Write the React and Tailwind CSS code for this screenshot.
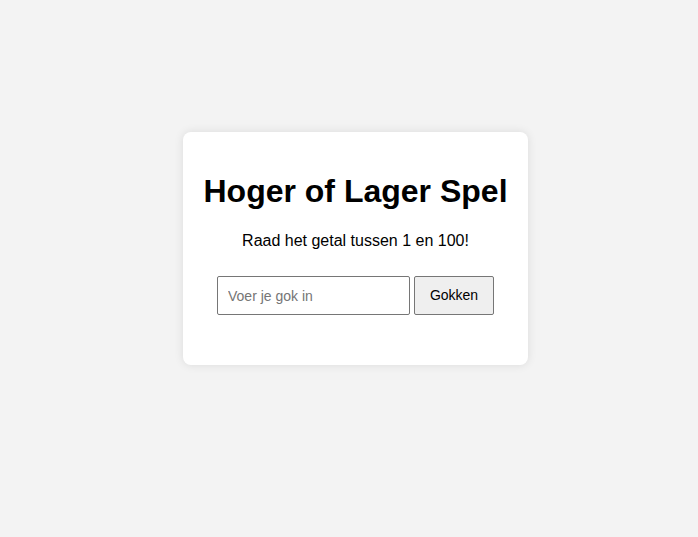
export default function App() {
  return (
    <div className="min-h-screen bg-[#f3f3f3] pt-[132px] pl-[183px]" style={{ fontFamily: '"Liberation Sans", Arial, sans-serif' }}>
      <div className="w-[345px] rounded-lg bg-white p-5 pb-[50px] text-center shadow-[0_0_10px_rgba(0,0,0,0.1)]">
        <h1 className="mt-[21px] text-[32px] font-bold leading-[37px] text-black">Hoger of Lager Spel</h1>
        <p className="mt-[22px] text-[16px] leading-[18px] text-black">Raad het getal tussen 1 en 100!</p>
        <div className="mt-[26px] flex justify-center gap-[4px]">
          <input
            type="text"
            placeholder="Voer je gok in"
            className="h-[39px] w-[193px] rounded-[2px] border border-[#767676] bg-white px-[10px] text-[14px] text-black placeholder:text-[#757575] outline-none"
          />
          <button className="h-[39px] w-[80px] rounded-[2px] border border-[#767676] bg-[#efefef] text-[14px] text-black">
            Gokken
          </button>
        </div>
      </div>
    </div>
  );
}
